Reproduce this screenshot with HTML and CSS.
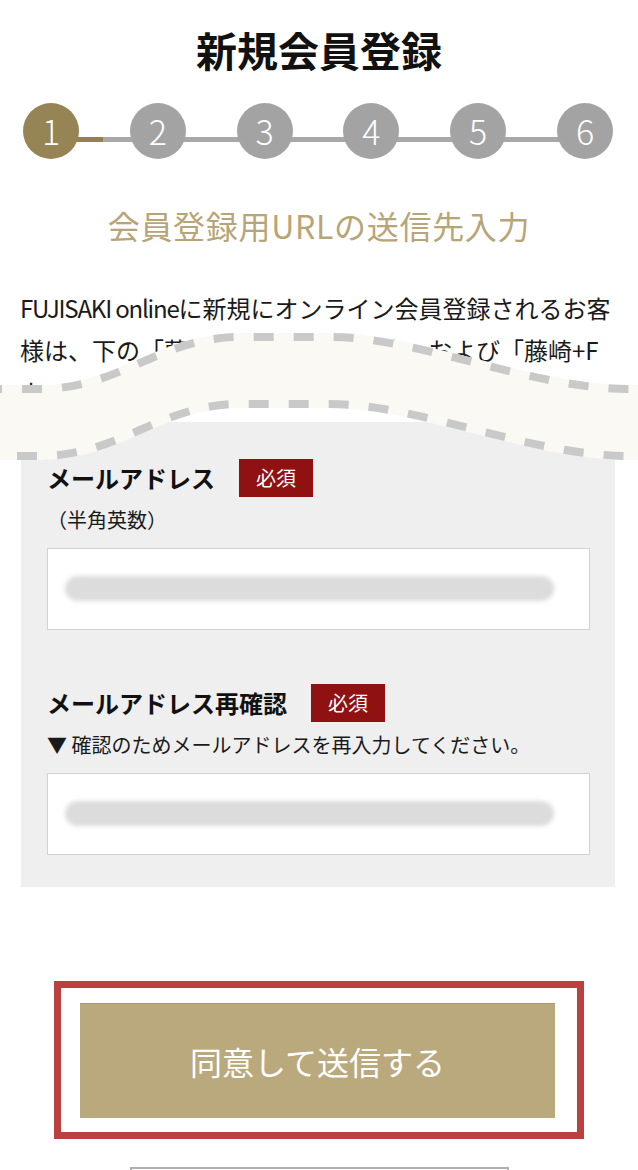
FILE: index.html
```html
<!DOCTYPE html>
<html lang="ja">
<head>
<meta charset="UTF-8" />
<meta name="viewport" content="width=device-width, initial-scale=1" />
<title>新規会員登録</title>
<link rel="stylesheet" href="styles.css">
</head>
<body>

<main class="page">
  <h1 class="page-title">新規会員登録</h1>

  <ol class="steps">
    <li class="step is-current">1</li>
    <li class="step">2</li>
    <li class="step">3</li>
    <li class="step">4</li>
    <li class="step">5</li>
    <li class="step">6</li>
  </ol>

  <h2 class="section-title">会員登録用URLの送信先入力</h2>

  <p class="lead"><span class="en">FUJISAKI online</span>に新規にオンライン会員登録されるお客様は、下の「藤崎ショップ利用規約」および「藤崎+Fカード会員規約」をご確認の上、ご入力ください。</p>

  <form class="form-box">
    <div class="field">
      <div class="field-head">
        <span class="field-label">メールアドレス</span>
        <span class="badge">必須</span>
      </div>
      <p class="field-note">（半角英数）</p>
      <div class="input"><span class="input-blur"></span></div>
    </div>

    <div class="field">
      <div class="field-head">
        <span class="field-label">メールアドレス再確認</span>
        <span class="badge">必須</span>
      </div>
      <p class="field-note">▼ 確認のためメールアドレスを再入力してください。</p>
      <div class="input"><span class="input-blur"></span></div>
    </div>
  </form>

  <div class="submit-frame">
    <button class="submit-btn" type="button">同意して送信する</button>
  </div>
  <button class="back-btn" type="button">戻る</button>

  <!-- omitted-content marker laid over the text -->
  <svg class="omit" viewBox="0 0 638 150" width="638" height="150" aria-hidden="true">
    <path class="omit-fill" d="M-10 69 L40 69 C120 69 160 17 240 17 L330 17 C420 17 530 69 630 69 L650 69 L650 136 L630 136 C530 136 420 84 330 84 L240 84 C160 84 120 136 40 136 L-10 136 Z" />
    <path class="omit-dash top" d="M-10 69 L40 69 C120 69 160 17 240 17 L330 17 C420 17 530 69 630 69 L650 69" />
    <path class="omit-dash bottom" d="M-10 136 L40 136 C120 136 160 84 240 84 L330 84 C420 84 530 136 630 136 L650 136" />
  </svg>
</main>

</body>
</html>
```

FILE: styles.css
```css
body {
  margin: 0;
  background: #fff;
  color: #1a1a1a;
  font-family: "Noto Sans CJK JP", "Noto Sans", sans-serif;
}
.page {
  position: relative;
  width: 638px;
  height: 1170px;
  overflow: hidden;
}
.page-title {
  margin: 0;
  padding-top: 25px;
  font-size: 41px;
  line-height: 49px;
  font-weight: 700;
  text-align: center;
  color: #111;
}
.steps {
  list-style: none;
  margin: 29px 25px 0 23px;
  padding: 0;
  display: flex;
  justify-content: space-between;
  background: linear-gradient(to right, #95814f 52px, #a8a8a8 52px) 28px 34px / calc(100% - 56px) 5px no-repeat;
}
.step {
  width: 56px;
  height: 56px;
  border-radius: 50%;
  background: #a3a3a3;
  color: #fff;
  font-size: 34px;
  font-weight: 300;
  line-height: 56px;
  text-align: center;
}
.step.is-current {
  background: #968454;
}
.section-title {
  margin: 45px 0 0;
  font-size: 32px;
  line-height: 42px;
  font-weight: 400;
  letter-spacing: 0.7px;
  color: #b8a577;
  text-align: center;
}
.lead {
  margin: 41px 0 0;
  padding: 0 20px;
  font-size: 24px;
  line-height: 42px;
}
.lead .en {
  letter-spacing: -1.2px;
}
.form-box {
  margin: 9px 23px 0 21px;
  padding: 37px 25px 32px 26px;
  background: #efefef;
}
.field + .field {
  margin-top: 54px;
}
.field-head {
  display: flex;
  align-items: center;
  gap: 24px;
}
.field-label {
  font-size: 24px;
  font-weight: 700;
  line-height: 38px;
  color: #111;
}
.badge {
  background: #8f1111;
  color: #fff;
  font-size: 20px;
  line-height: 38px;
  padding: 0 17px;
}
.field-note {
  margin: 8px 0 0;
  font-size: 20px;
  line-height: 30px;
}
.input {
  box-sizing: border-box;
  margin-top: 13px;
  height: 82px;
  padding: 27px 35px 0 17px;
  border: 1px solid #d2d2d2;
  background: #fff;
}
.input-blur {
  display: block;
  height: 25px;
  border-radius: 13px;
  background: #dcdcdc;
  filter: blur(2px);
}
.submit-frame {
  box-sizing: border-box;
  width: 530px;
  margin: 94px auto 0;
  padding: 15px 22px 14px 19px;
  border: 7px solid #bb4141;
}
.submit-btn {
  display: block;
  width: 100%;
  height: 115px;
  border: 0;
  border-top: 1px solid #ad9a6c;
  background: #bba97e;
  color: #fff;
  font-family: inherit;
  font-size: 32px;
  cursor: pointer;
}
.back-btn {
  display: block;
  width: 379px;
  height: 80px;
  margin: 28px auto 0;
  border: 2px solid #b0b0b0;
  background: #fff;
  color: #333;
  font-family: inherit;
  font-size: 24px;
}
.omit {
  position: absolute;
  left: 0;
  top: 320px;
  z-index: 1;
}
.omit-fill {
  fill: #fbf9f4;
  stroke: #fbf9f4;
  stroke-width: 8;
}
.omit-dash {
  fill: none;
  stroke: #c9c9c9;
  stroke-width: 8;
  stroke-dasharray: 20 20;
}
.omit-dash.top {
  stroke-dashoffset: 8;
}
.omit-dash.bottom {
  stroke-dashoffset: 13;
}
```
